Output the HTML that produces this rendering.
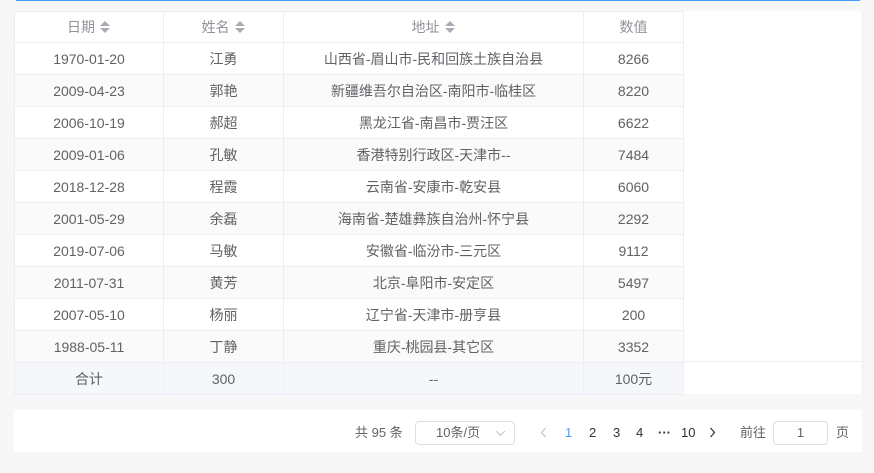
<!DOCTYPE html>
<html><head><meta charset="utf-8"><style>
body{margin:0;width:874px;height:473px;background:#f7f7f8;font-family:"Liberation Sans","Noto Sans CJK SC",sans-serif;font-size:14px;color:#606266;position:relative;overflow:hidden}
.bl{position:absolute;left:16px;top:0;width:844px;height:1px;background:#409eff}
.wrap{position:absolute;left:14px;top:11px;width:848px;height:383px;background:#fff;border-right:1px solid #ebeef5}
table{border-collapse:collapse;table-layout:fixed;position:absolute;left:0;top:0;width:670px}
td,th{border:1px solid #ebeef5;text-align:center;height:31px;padding:0;font-weight:normal;line-height:16px}
th{color:#909399;height:30px}
tr.s td{background:#fafafa}
tr.sum td{background:#f5f7fa}
.c{display:inline-block;vertical-align:middle;margin-left:5px;width:11px;height:14px;position:relative;top:-1px}
.c:before{content:"";position:absolute;left:0;top:1px;border:5.5px solid transparent;border-bottom:5px solid #a8abb2;border-top:0}
.c:after{content:"";position:absolute;left:0;top:8px;border:5.5px solid transparent;border-top:5px solid #a8abb2;border-bottom:0}
.pg{position:absolute;left:14px;top:410px;width:848px;height:42px;background:#fff;font-size:13px}
.pg span{position:absolute;top:13px;line-height:20px}
.box{position:absolute;border:1px solid #dcdfe6;border-radius:4px;height:22px;top:11px;text-align:center;line-height:22px}
</style></head><body>
<div class="bl"></div>
<div class="wrap">
<table>
<colgroup><col style="width:149px"><col style="width:120px"><col style="width:300px"><col style="width:100px"></colgroup>
<tr><th>日期<i class="c"></i></th><th>姓名<i class="c"></i></th><th>地址<i class="c"></i></th><th>数值</th></tr>
<tr><td>1970-01-20</td><td>江勇</td><td>山西省-眉山市-民和回族土族自治县</td><td>8266</td></tr>
<tr class="s"><td>2009-04-23</td><td>郭艳</td><td>新疆维吾尔自治区-南阳市-临桂区</td><td>8220</td></tr>
<tr><td>2006-10-19</td><td>郝超</td><td>黑龙江省-南昌市-贾汪区</td><td>6622</td></tr>
<tr class="s"><td>2009-01-06</td><td>孔敏</td><td>香港特别行政区-天津市--</td><td>7484</td></tr>
<tr><td>2018-12-28</td><td>程霞</td><td>云南省-安康市-乾安县</td><td>6060</td></tr>
<tr class="s"><td>2001-05-29</td><td>余磊</td><td>海南省-楚雄彝族自治州-怀宁县</td><td>2292</td></tr>
<tr><td>2019-07-06</td><td>马敏</td><td>安徽省-临汾市-三元区</td><td>9112</td></tr>
<tr class="s"><td>2011-07-31</td><td>黄芳</td><td>北京-阜阳市-安定区</td><td>5497</td></tr>
<tr><td>2007-05-10</td><td>杨丽</td><td>辽宁省-天津市-册亨县</td><td>200</td></tr>
<tr class="s"><td>1988-05-11</td><td>丁静</td><td>重庆-桃园县-其它区</td><td>3352</td></tr>
<tr class="sum"><td>合计</td><td>300</td><td>--</td><td>100元</td></tr>
</table>
<div style="position:absolute;left:669px;right:0;top:350px;height:1px;background:#ebeef5"></div>
</div>
<div class="pg">
<span style="left:341px">共 95 条</span>
<div class="box" style="left:401px;width:98px;text-align:left"><span style="position:absolute;left:20px;top:0;line-height:22px">10条/页</span><svg style="position:absolute;left:79px;top:8px" width="11" height="7" viewBox="0 0 11 7"><path d="M1 1l4.5 4.5L10 1" fill="none" stroke="#c0c4cc" stroke-width="1"/></svg></div>
<svg style="position:absolute;left:526px;top:17px" width="7" height="11" viewBox="0 0 7 11"><path d="M5.5 1L1.5 5.5l4 4.5" fill="none" stroke="#c0c4cc" stroke-width="1.2"/></svg>
<span style="left:551px;color:#409eff">1</span>
<span style="left:575px;color:#303133">2</span>
<span style="left:599px;color:#303133">3</span>
<span style="left:622px;color:#303133">4</span>
<span style="left:644px;color:#303133;font-weight:bold;top:13px">···</span>
<span style="left:667px;color:#303133">10</span>
<svg style="position:absolute;left:695px;top:17px" width="7" height="11" viewBox="0 0 7 11"><path d="M1.5 1l4 4.5-4 4.5" fill="none" stroke="#303133" stroke-width="1.2"/></svg>
<span style="left:726px">前往</span>
<div class="box" style="left:759px;width:53px">1</div>
<span style="left:822px">页</span>
</div>
</body></html>
